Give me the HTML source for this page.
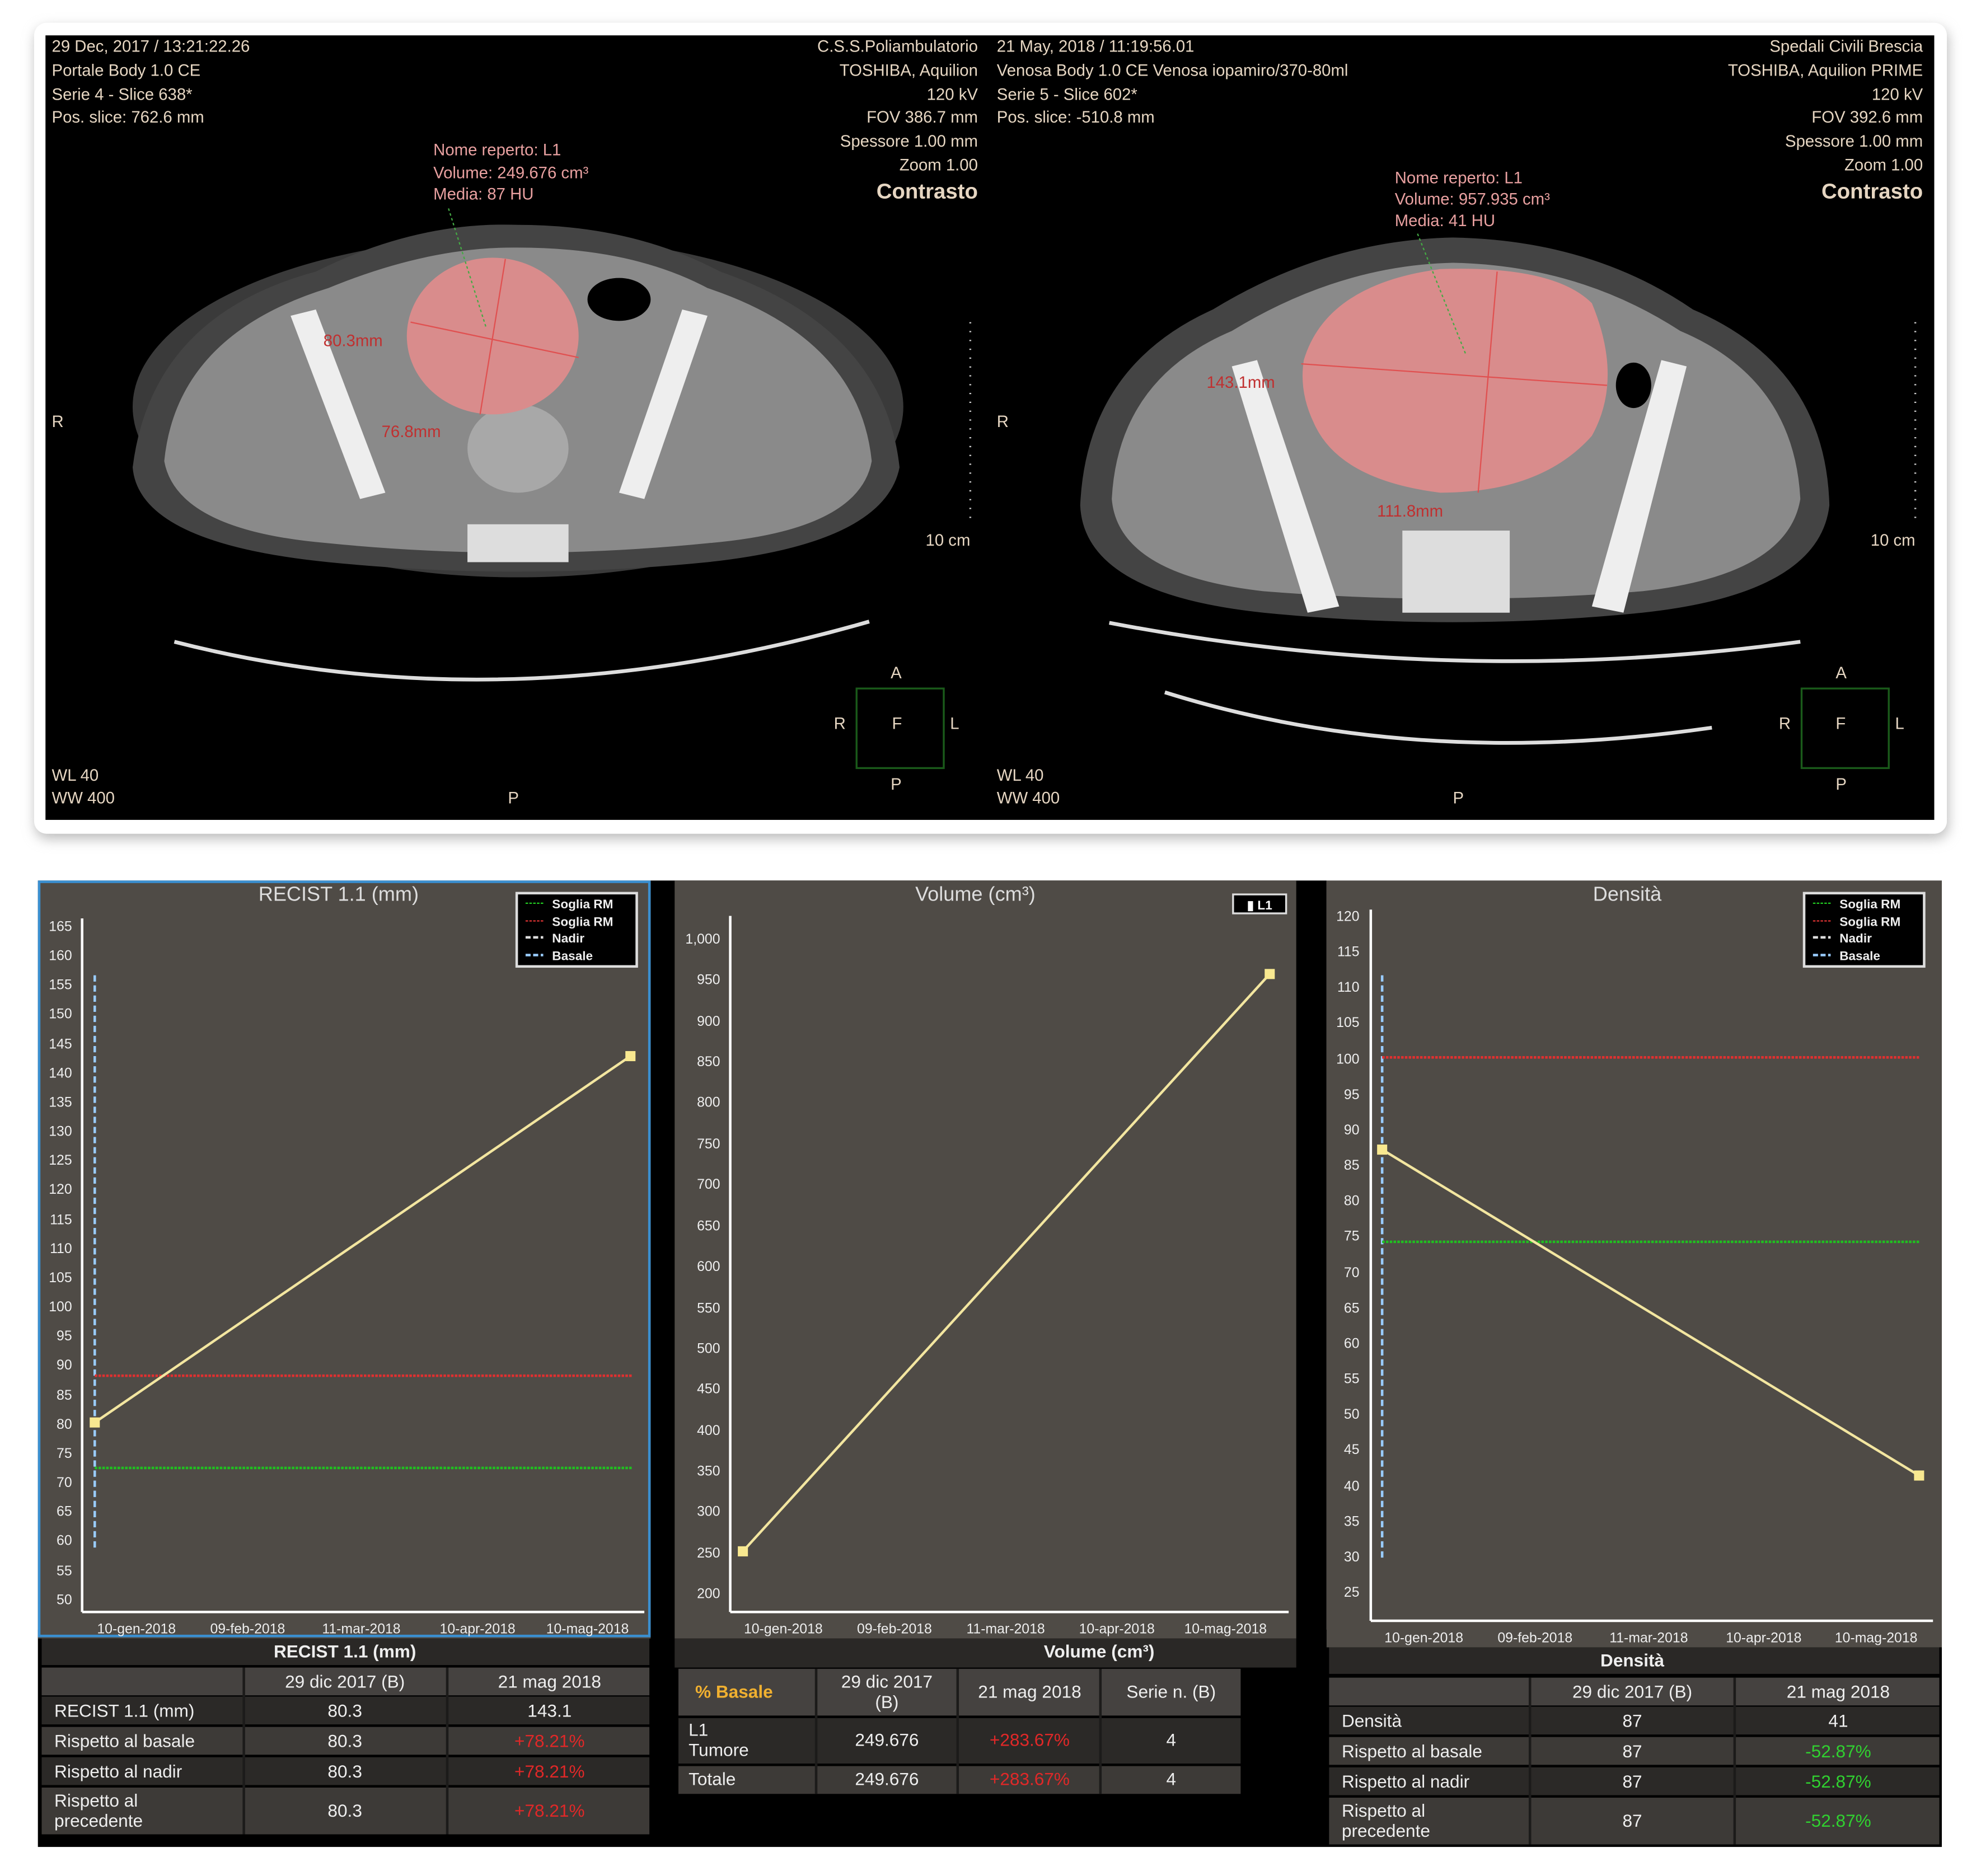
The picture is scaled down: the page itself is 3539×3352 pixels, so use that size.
<!DOCTYPE html>
<html><head><meta charset="utf-8">
<style>
html,body{margin:0;padding:0;background:#fff;}
svg{display:block;}
text{font-family:"Liberation Sans",sans-serif;}
</style></head>
<body>
<svg width="3539" height="3352" viewBox="0 0 1568 1485" preserveAspectRatio="none" xmlns="http://www.w3.org/2000/svg">
<defs>
<filter id="sh" x="-5%" y="-5%" width="110%" height="115%"><feGaussianBlur stdDeviation="5"/></filter>
</defs>
<rect width="1568" height="1485" fill="#fff"/>
<!-- CT frame -->
<rect x="28" y="22" width="1514" height="642" rx="10" fill="#bbb" filter="url(#sh)"/>
<rect x="27" y="18" width="1514" height="642" rx="10" fill="#fff"/>
<rect x="36" y="28" width="1495" height="621" fill="#000"/>

<!-- Left CT -->
<g>
<ellipse cx="410" cy="322" rx="305" ry="135" fill="#3a3a3a"/>
<path d="M105,370 Q120,250 250,215 Q330,175 410,178 Q500,178 570,215 Q700,260 712,370 Q700,430 560,445 Q410,460 260,445 Q110,430 105,370Z" fill="#444"/>
<path d="M130,365 Q140,265 260,228 Q340,195 410,196 Q500,196 560,228 Q680,268 690,365 Q680,420 560,430 Q410,445 260,430 Q140,420 130,365Z" fill="#8a8a8a"/>
<path d="M230,250 L250,245 L305,390 L285,395Z" fill="#eee"/>
<path d="M560,250 L540,245 L490,390 L510,395Z" fill="#eee"/>
<ellipse cx="410" cy="355" rx="40" ry="35" fill="#a8a8a8"/>
<rect x="370" y="415" width="80" height="30" fill="#ddd"/>
<ellipse cx="490" cy="237" rx="25" ry="17" fill="#000"/>
<ellipse cx="390" cy="266" rx="68" ry="62" fill="#d98c8c"/>
<line x1="325" y1="255" x2="458" y2="283" stroke="#e05050" stroke-width="1"/>
<line x1="400" y1="205" x2="380" y2="328" stroke="#e05050" stroke-width="1"/>
<line x1="355" y1="165" x2="385" y2="260" stroke="#4a4" stroke-width="1" stroke-dasharray="2,2"/>
<text x="256" y="274" font-size="13" fill="#c03030">80.3mm</text>
<text x="302" y="346" font-size="13" fill="#c03030">76.8mm</text>
<path d="M138,508 Q400,575 688,492" stroke="#ddd" stroke-width="3" fill="none"/>
</g>
<g font-size="13" fill="#e6d6c2">
<text x="41" y="41">29 Dec, 2017 / 13:21:22.26</text>
<text x="41" y="60">Portale Body 1.0 CE</text>
<text x="41" y="79">Serie 4 - Slice 638*</text>
<text x="41" y="97">Pos. slice: 762.6 mm</text>
<g text-anchor="end">
<text x="774" y="41">C.S.S.Poliambulatorio</text>
<text x="774" y="60">TOSHIBA, Aquilion</text>
<text x="774" y="79">120 kV</text>
<text x="774" y="97">FOV 386.7 mm</text>
<text x="774" y="116">Spessore 1.00 mm</text>
<text x="774" y="135">Zoom 1.00</text>
<text x="774" y="157" font-size="17" font-weight="bold">Contrasto</text>
<text x="768" y="432">10 cm</text>
</g>
<text x="41" y="338">R</text>
<text x="41" y="618">WL    40</text>
<text x="41" y="636">WW   400</text>
<text x="402" y="636">P</text>
<text x="705" y="537">A</text>
<text x="705" y="625">P</text>
<text x="660" y="577">R</text>
<text x="706" y="577">F</text>
<text x="752" y="577">L</text>
</g>
<g fill="#e8a0a0" font-size="13"><text x="343" y="123">Nome reperto: L1</text><text x="343" y="141">Volume: 249.676 cm³</text><text x="343" y="158">Media: 87 HU</text></g>
<rect x="678" y="545" width="69" height="63" fill="none" stroke="#1a5a1a" stroke-width="1.5"/>
<line x1="768" y1="255" x2="768" y2="415" stroke="#ccc" stroke-width="1.5" stroke-dasharray="1,6"/>

<!-- Right CT -->
<g>
<path d="M855,400 Q860,290 960,245 Q1050,190 1150,188 Q1260,190 1340,245 Q1445,290 1448,400 Q1440,470 1300,485 Q1150,500 1000,485 Q858,470 855,400Z" fill="#444"/>
<path d="M880,395 Q885,300 975,262 Q1060,210 1150,208 Q1250,210 1330,262 Q1420,300 1425,395 Q1415,455 1300,468 Q1150,480 1000,468 Q885,455 880,395Z" fill="#8a8a8a"/>
<path d="M975,290 L995,285 L1060,480 L1035,485Z" fill="#eee"/>
<path d="M1335,290 L1315,285 L1260,480 L1285,485Z" fill="#eee"/>
<rect x="1110" y="420" width="85" height="65" fill="#ddd"/>
<ellipse cx="1293" cy="305" rx="14" ry="18" fill="#000"/>
<path d="M1032,285 Q1050,225 1140,213 Q1230,210 1260,240 Q1285,300 1260,345 Q1220,390 1140,390 Q1060,380 1040,335 Q1028,310 1032,285Z" fill="#d98c8c"/>
<line x1="1030" y1="288" x2="1272" y2="305" stroke="#e05050" stroke-width="1"/>
<line x1="1185" y1="215" x2="1170" y2="390" stroke="#e05050" stroke-width="1"/>
<line x1="1122" y1="185" x2="1160" y2="280" stroke="#4a4" stroke-width="1" stroke-dasharray="2,2"/>
<text x="955" y="307" font-size="13" fill="#c03030">143.1mm</text>
<text x="1090" y="409" font-size="13" fill="#c03030">111.8mm</text>
<path d="M878,493 Q1150,545 1425,508" stroke="#ddd" stroke-width="3" fill="none"/>
<path d="M922,548 Q1120,610 1355,576" stroke="#ddd" stroke-width="3" fill="none"/>
</g>
<g font-size="13" fill="#e6d6c2">
<text x="789" y="41">21 May, 2018 / 11:19:56.01</text>
<text x="789" y="60">Venosa Body 1.0 CE Venosa iopamiro/370-80ml</text>
<text x="789" y="79">Serie 5 - Slice 602*</text>
<text x="789" y="97">Pos. slice: -510.8 mm</text>
<g text-anchor="end">
<text x="1522" y="41">Spedali Civili Brescia</text>
<text x="1522" y="60">TOSHIBA, Aquilion PRIME</text>
<text x="1522" y="79">120 kV</text>
<text x="1522" y="97">FOV 392.6 mm</text>
<text x="1522" y="116">Spessore 1.00 mm</text>
<text x="1522" y="135">Zoom 1.00</text>
<text x="1522" y="157" font-size="17" font-weight="bold">Contrasto</text>
<text x="1516" y="432">10 cm</text>
</g>
<text x="789" y="338">R</text>
<text x="789" y="618">WL    40</text>
<text x="789" y="636">WW   400</text>
<text x="1150" y="636">P</text>
<text x="1453" y="537">A</text>
<text x="1453" y="625">P</text>
<text x="1408" y="577">R</text>
<text x="1453" y="577">F</text>
<text x="1500" y="577">L</text>
</g>
<g fill="#e8a0a0" font-size="13"><text x="1104" y="145">Nome reperto: L1</text><text x="1104" y="162">Volume: 957.935 cm³</text><text x="1104" y="179">Media: 41 HU</text></g>
<rect x="1426" y="545" width="69" height="63" fill="none" stroke="#1a5a1a" stroke-width="1.5"/>
<line x1="1516" y1="255" x2="1516" y2="415" stroke="#ccc" stroke-width="1.5" stroke-dasharray="1,6"/>

<!-- Bottom black background -->
<rect x="30" y="1290" width="1507" height="172" fill="#000"/>
<rect x="515" y="697" width="535" height="600" fill="#000"/>

<!-- Panel 1 -->
<rect x="30" y="697" width="485" height="600" fill="#4f4b46"/>
<rect x="31" y="698" width="483" height="597" fill="none" stroke="#3a8fd0" stroke-width="2"/>
<text x="268" y="713" font-size="16" fill="#ddd" text-anchor="middle">RECIST 1.1 (mm)</text>
<rect x="409" y="707" width="95" height="58" fill="#000" stroke="#ddd" stroke-width="2"/>
<g font-size="10" fill="#eee" font-weight="bold">
<text x="437" y="719">Soglia RM</text><text x="437" y="733">Soglia RM</text><text x="437" y="746">Nadir</text><text x="437" y="760">Basale</text></g>
<line x1="416" y1="715" x2="430" y2="715" stroke="#2c2" stroke-dasharray="2,1"/>
<line x1="416" y1="729" x2="430" y2="729" stroke="#d33" stroke-dasharray="2,1"/>
<line x1="416" y1="742" x2="430" y2="742" stroke="#ddd" stroke-dasharray="4,2" stroke-width="2"/>
<line x1="416" y1="756" x2="430" y2="756" stroke="#9cf" stroke-dasharray="4,2" stroke-width="2"/>
<line x1="65" y1="727" x2="65" y2="1276" stroke="#fff" stroke-width="2"/>
<line x1="65" y1="1276" x2="510" y2="1276" stroke="#fff" stroke-width="2"/>
<line x1="75" y1="772" x2="75" y2="1228" stroke="#9cf" stroke-width="2" stroke-dasharray="5,3"/>
<line x1="75" y1="1089" x2="500" y2="1089" stroke="#e03030" stroke-width="2" stroke-dasharray="2,1"/>
<line x1="75" y1="1162" x2="500" y2="1162" stroke="#20c020" stroke-width="2" stroke-dasharray="2,1"/>
<line x1="75" y1="1126" x2="499" y2="836" stroke="#f3e6a0" stroke-width="2"/>
<rect x="71" y="1122" width="8" height="8" fill="#f8e890"/><rect x="495" y="832" width="8" height="8" fill="#f8e890"/>
<g font-size="11" fill="#eee" text-anchor="end">
<text x="57" y="737">165</text><text x="57" y="760">160</text><text x="57" y="783">155</text><text x="57" y="806">150</text><text x="57" y="830">145</text><text x="57" y="853">140</text><text x="57" y="876">135</text><text x="57" y="899">130</text><text x="57" y="922">125</text><text x="57" y="945">120</text><text x="57" y="969">115</text><text x="57" y="992">110</text><text x="57" y="1015">105</text><text x="57" y="1038">100</text><text x="57" y="1061">95</text><text x="57" y="1084">90</text><text x="57" y="1108">85</text><text x="57" y="1131">80</text><text x="57" y="1154">75</text><text x="57" y="1177">70</text><text x="57" y="1200">65</text><text x="57" y="1223">60</text><text x="57" y="1247">55</text><text x="57" y="1270">50</text>
</g>
<g font-size="11" fill="#eee" text-anchor="middle">
<text x="108" y="1293">10-gen-2018</text><text x="196" y="1293">09-feb-2018</text><text x="286" y="1293">11-mar-2018</text><text x="378" y="1293">10-apr-2018</text><text x="465" y="1293">10-mag-2018</text>
</g>
<!-- Table 1 -->
<rect x="33" y="1297" width="481" height="21" fill="#2a2826"/>
<text x="273" y="1312" font-size="14" font-weight="bold" fill="#eee" text-anchor="middle">RECIST 1.1 (mm)</text>
<rect x="33" y="1320" width="481" height="22" fill="#454240"/>
<rect x="33" y="1343" width="481" height="22" fill="#2b2927"/>
<rect x="33" y="1367" width="481" height="22" fill="#3d3a37"/>
<rect x="33" y="1391" width="481" height="22" fill="#2b2927"/>
<rect x="33" y="1415" width="481" height="37" fill="#3d3a37"/>
<line x1="193" y1="1320" x2="193" y2="1452" stroke="#1c1b1a" stroke-width="2"/>
<line x1="354" y1="1320" x2="354" y2="1452" stroke="#1c1b1a" stroke-width="2"/>
<g font-size="14" fill="#eee">
<text x="273" y="1336" text-anchor="middle">29 dic 2017 (B)</text><text x="435" y="1336" text-anchor="middle">21 mag 2018</text>
<text x="43" y="1359">RECIST 1.1 (mm)</text><text x="273" y="1359" text-anchor="middle">80.3</text><text x="435" y="1359" text-anchor="middle">143.1</text>
<text x="43" y="1383">Rispetto al basale</text><text x="273" y="1383" text-anchor="middle">80.3</text>
<text x="43" y="1407">Rispetto al nadir</text><text x="273" y="1407" text-anchor="middle">80.3</text>
<text x="43" y="1430">Rispetto al</text><text x="43" y="1446">precedente</text><text x="273" y="1438" text-anchor="middle">80.3</text>
</g>
<g font-size="14" fill="#e02828" text-anchor="middle"><text x="435" y="1383">+78.21%</text><text x="435" y="1407">+78.21%</text><text x="435" y="1438">+78.21%</text></g>

<!-- Panel 2 -->
<rect x="534" y="697" width="492" height="600" fill="#4f4b46"/>
<text x="772" y="713" font-size="16" fill="#ddd" text-anchor="middle">Volume (cm³)</text>
<rect x="976" y="708" width="42" height="15" fill="#000" stroke="#ddd" stroke-width="1.5"/>
<text x="997" y="720" font-size="10" fill="#fff" text-anchor="middle" font-weight="bold">▮ L1</text>
<line x1="578" y1="725" x2="578" y2="1276" stroke="#fff" stroke-width="2"/>
<line x1="578" y1="1276" x2="1020" y2="1276" stroke="#fff" stroke-width="2"/>
<line x1="588" y1="1228" x2="1005" y2="771" stroke="#f3e6a0" stroke-width="2"/>
<rect x="584" y="1224" width="8" height="8" fill="#f8e890"/><rect x="1001" y="767" width="8" height="8" fill="#f8e890"/>
<g font-size="11" fill="#eee" text-anchor="end">
<text x="570" y="747">1,000</text><text x="570" y="779">950</text><text x="570" y="812">900</text><text x="570" y="844">850</text><text x="570" y="876">800</text><text x="570" y="909">750</text><text x="570" y="941">700</text><text x="570" y="974">650</text><text x="570" y="1006">600</text><text x="570" y="1039">550</text><text x="570" y="1071">500</text><text x="570" y="1103">450</text><text x="570" y="1136">400</text><text x="570" y="1168">350</text><text x="570" y="1200">300</text><text x="570" y="1233">250</text><text x="570" y="1265">200</text>
</g>
<g font-size="11" fill="#eee" text-anchor="middle">
<text x="620" y="1293">10-gen-2018</text><text x="708" y="1293">09-feb-2018</text><text x="796" y="1293">11-mar-2018</text><text x="884" y="1293">10-apr-2018</text><text x="970" y="1293">10-mag-2018</text>
</g>
<rect x="534" y="1297" width="492" height="23" fill="#2a2826"/>
<text x="870" y="1312" font-size="14" font-weight="bold" fill="#eee" text-anchor="middle">Volume (cm³)</text>
<rect x="537" y="1321" width="445" height="37" fill="#454240"/>
<rect x="537" y="1360" width="445" height="36" fill="#2b2927"/>
<rect x="537" y="1398" width="445" height="22" fill="#3d3a37"/>
<line x1="646" y1="1321" x2="646" y2="1420" stroke="#1c1b1a" stroke-width="2"/>
<line x1="758" y1="1321" x2="758" y2="1420" stroke="#1c1b1a" stroke-width="2"/>
<line x1="871" y1="1321" x2="871" y2="1420" stroke="#1c1b1a" stroke-width="2"/>
<g font-size="14" fill="#eee" text-anchor="middle">
<text x="581" y="1344" fill="#f0b030" font-weight="bold">% Basale</text>
<text x="702" y="1336">29 dic 2017</text><text x="702" y="1352">(B)</text>
<text x="815" y="1344">21 mag 2018</text><text x="927" y="1344">Serie n. (B)</text>
<text x="702" y="1382">249.676</text><text x="927" y="1382">4</text>
<text x="702" y="1413">249.676</text><text x="927" y="1413">4</text>
<text x="815" y="1382" fill="#e02828">+283.67%</text><text x="815" y="1413" fill="#e02828">+283.67%</text>
</g>
<g font-size="14" fill="#eee"><text x="545" y="1374">L1</text><text x="545" y="1390">Tumore</text><text x="545" y="1413">Totale</text></g>

<!-- Panel 3 -->
<rect x="1050" y="697" width="487" height="607" fill="#4f4b46"/>
<text x="1288" y="713" font-size="16" fill="#ddd" text-anchor="middle">Densità</text>
<rect x="1428" y="707" width="95" height="58" fill="#000" stroke="#ddd" stroke-width="2"/>
<g font-size="10" fill="#eee" font-weight="bold">
<text x="1456" y="719">Soglia RM</text><text x="1456" y="733">Soglia RM</text><text x="1456" y="746">Nadir</text><text x="1456" y="760">Basale</text></g>
<line x1="1435" y1="715" x2="1449" y2="715" stroke="#2c2" stroke-dasharray="2,1"/>
<line x1="1435" y1="729" x2="1449" y2="729" stroke="#d33" stroke-dasharray="2,1"/>
<line x1="1435" y1="742" x2="1449" y2="742" stroke="#ddd" stroke-dasharray="4,2" stroke-width="2"/>
<line x1="1435" y1="756" x2="1449" y2="756" stroke="#9cf" stroke-dasharray="4,2" stroke-width="2"/>
<line x1="1085" y1="720" x2="1085" y2="1283" stroke="#fff" stroke-width="2"/>
<line x1="1085" y1="1283" x2="1530" y2="1283" stroke="#fff" stroke-width="2"/>
<line x1="1094" y1="772" x2="1094" y2="1236" stroke="#9cf" stroke-width="2" stroke-dasharray="5,3"/>
<line x1="1094" y1="837" x2="1519" y2="837" stroke="#e03030" stroke-width="2" stroke-dasharray="2,1"/>
<line x1="1094" y1="983" x2="1519" y2="983" stroke="#20c020" stroke-width="2" stroke-dasharray="2,1"/>
<line x1="1094" y1="910" x2="1519" y2="1168" stroke="#f3e6a0" stroke-width="2"/>
<rect x="1090" y="906" width="8" height="8" fill="#f8e890"/><rect x="1515" y="1164" width="8" height="8" fill="#f8e890"/>
<g font-size="11" fill="#eee" text-anchor="end">
<text x="1076" y="729">120</text><text x="1076" y="757">115</text><text x="1076" y="785">110</text><text x="1076" y="813">105</text><text x="1076" y="842">100</text><text x="1076" y="870">95</text><text x="1076" y="898">90</text><text x="1076" y="926">85</text><text x="1076" y="954">80</text><text x="1076" y="982">75</text><text x="1076" y="1011">70</text><text x="1076" y="1039">65</text><text x="1076" y="1067">60</text><text x="1076" y="1095">55</text><text x="1076" y="1123">50</text><text x="1076" y="1151">45</text><text x="1076" y="1180">40</text><text x="1076" y="1208">35</text><text x="1076" y="1236">30</text><text x="1076" y="1264">25</text>
</g>
<g font-size="11" fill="#eee" text-anchor="middle">
<text x="1127" y="1300">10-gen-2018</text><text x="1215" y="1300">09-feb-2018</text><text x="1305" y="1300">11-mar-2018</text><text x="1396" y="1300">10-apr-2018</text><text x="1485" y="1300">10-mag-2018</text>
</g>
<rect x="1052" y="1304" width="483" height="21" fill="#2a2826"/>
<text x="1292" y="1319" font-size="14" font-weight="bold" fill="#eee" text-anchor="middle">Densità</text>
<rect x="1052" y="1328" width="483" height="22" fill="#454240"/>
<rect x="1052" y="1351" width="483" height="22" fill="#2b2927"/>
<rect x="1052" y="1375" width="483" height="22" fill="#3d3a37"/>
<rect x="1052" y="1399" width="483" height="22" fill="#2b2927"/>
<rect x="1052" y="1423" width="483" height="37" fill="#3d3a37"/>
<line x1="1211" y1="1328" x2="1211" y2="1460" stroke="#1c1b1a" stroke-width="2"/>
<line x1="1373" y1="1328" x2="1373" y2="1460" stroke="#1c1b1a" stroke-width="2"/>
<g font-size="14" fill="#eee">
<text x="1292" y="1344" text-anchor="middle">29 dic 2017 (B)</text><text x="1455" y="1344" text-anchor="middle">21 mag 2018</text>
<text x="1062" y="1367">Densità</text><text x="1292" y="1367" text-anchor="middle">87</text><text x="1455" y="1367" text-anchor="middle">41</text>
<text x="1062" y="1391">Rispetto al basale</text><text x="1292" y="1391" text-anchor="middle">87</text>
<text x="1062" y="1415">Rispetto al nadir</text><text x="1292" y="1415" text-anchor="middle">87</text>
<text x="1062" y="1438">Rispetto al</text><text x="1062" y="1454">precedente</text><text x="1292" y="1446" text-anchor="middle">87</text>
</g>
<g font-size="14" fill="#30d030" text-anchor="middle"><text x="1455" y="1391">-52.87%</text><text x="1455" y="1415">-52.87%</text><text x="1455" y="1446">-52.87%</text></g>
</svg>
</body></html>
